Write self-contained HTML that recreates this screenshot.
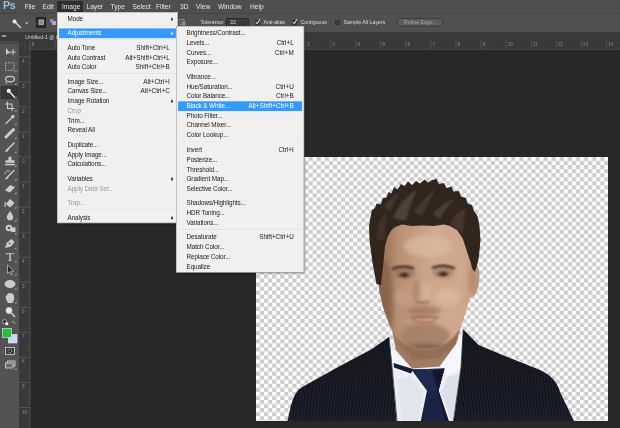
<!DOCTYPE html>
<html><head><meta charset="utf-8">
<style>
html,body{margin:0;padding:0;}
body{width:620px;height:428px;overflow:hidden;background:#282828;position:relative;font-family:"Liberation Sans",sans-serif;}
.abs{position:absolute;}
#menubar{left:0;top:0;width:620px;height:14px;background:#4f4f4f;}
#optbar{left:0;top:13px;width:620px;height:19px;background:#505050;border-top:1px solid #444;box-sizing:border-box;}
#tabbar{left:0;top:32px;width:620px;height:9px;background:#3a3a3a;}
#hruler{left:19px;top:41px;width:601px;height:9px;background:#393939;}
#vruler{left:19px;top:50px;width:11px;height:378px;background:#393939;}
#toolbar{left:0;top:41px;width:19px;height:387px;background:#535353;}
.sc{position:absolute;transform:scale(0.5125);transform-origin:0 0;}
.mb{position:absolute;top:0;font-size:12.9px;line-height:16px;color:#e4e4e4;white-space:nowrap;}
.ob{position:absolute;font-size:10.2px;line-height:16px;color:#dcdcdc;white-space:nowrap;}
.menu{background:#f0f0f0;border:1.6px solid #979797;box-sizing:border-box;box-shadow:3px 3px 4px rgba(0,0,0,.55);}
.mi{position:absolute;left:3px;right:3px;height:19px;font-size:12.4px;line-height:19px;color:#1a1a1a;white-space:nowrap;}
.mi .l{position:absolute;letter-spacing:-0.18px;}
.mi .r{position:absolute;}
.mi span,.mb,.ob{filter:blur(0.45px);}
.tl{filter:blur(0.3px);}
.mi.dis{color:#9a9a9a;}
.mi.hl{background:#3399ff;color:#fff;}
.sep{position:absolute;left:3px;right:3px;height:0;border-top:1.5px solid #d2d2d2;border-bottom:1.5px solid #fbfbfb;}
.arr{position:absolute;right:5px;top:5.5px;width:0;height:0;border-left:4.5px solid #111;border-top:4px solid transparent;border-bottom:4px solid transparent;}
</style></head><body>
<div class="abs" id="menubar"></div>
<div class="abs" id="optbar"></div>
<div class="abs" id="tabbar"></div>
<div class="abs" id="hruler"></div>
<div class="abs" id="vruler"></div>
<div class="abs" id="toolbar"></div>

<!-- canvas -->
<svg class="abs" style="left:256px;top:157px;" width="352" height="264" viewBox="256 157 352 264">
<defs>
  <pattern id="chk" x="256" y="157" width="8.1" height="8.1" patternUnits="userSpaceOnUse">
    <rect width="8.1" height="8.1" fill="#ffffff"/>
    <rect x="4.05" y="0" width="4.05" height="4.05" fill="#cbcbcb"/>
    <rect x="0" y="4.05" width="4.05" height="4.05" fill="#cbcbcb"/>
  </pattern>
  <filter id="b1" x="-10%" y="-10%" width="120%" height="120%"><feGaussianBlur stdDeviation="0.6"/></filter>
  <filter id="b2" x="-20%" y="-20%" width="140%" height="140%"><feGaussianBlur stdDeviation="2.2"/></filter>
  <filter id="b3" x="-20%" y="-20%" width="140%" height="140%"><feGaussianBlur stdDeviation="1.1"/></filter>
  <linearGradient id="skin" x1="0" y1="0" x2="1" y2="0">
    <stop offset="0" stop-color="#8f6850"/>
    <stop offset="0.2" stop-color="#b98f74"/>
    <stop offset="0.55" stop-color="#d0a98e"/>
    <stop offset="0.85" stop-color="#cfa78c"/>
    <stop offset="1" stop-color="#bd9278"/>
  </linearGradient>
  <linearGradient id="jack" x1="0" y1="0" x2="0" y2="1">
    <stop offset="0" stop-color="#101119"/>
    <stop offset="1" stop-color="#181a25"/>
  </linearGradient>
  <clipPath id="faceclip"><path id="facep" d="M380 262 L381 240 L388 222 L402 216 L423 215 L444 216 L460 222 L468 240 L471 262 L474.5 263.5 Q480 267 479.5 276 Q479 287 476 293 Q473 298 470 297.5 L468 304 L464 318 L459.5 329 Q452 341 440 346.5 Q427 350.5 414 347 Q402 343 396.5 337 L390 326.5 L384 310 L379.7 293 L378 278 Z"/></clipPath>
  <pattern id="pin" width="3.2" height="10" patternUnits="userSpaceOnUse" patternTransform="rotate(8)">
    <rect x="0" y="0" width="0.5" height="10" fill="#3a3d4e" opacity="0.55"/>
  </pattern>
  <pattern id="pin2" width="3.2" height="10" patternUnits="userSpaceOnUse" patternTransform="rotate(-8)">
    <rect x="0" y="0" width="0.5" height="10" fill="#3a3d4e" opacity="0.55"/>
  </pattern>
</defs>
<rect x="256" y="157" width="352" height="264" fill="url(#chk)"/>
<g filter="url(#b1)">
  <!-- jacket -->
  <path d="M287.5 421 L291 405 Q295 390 304 386 L340 366 L372 349 L389 337 L392 367 L397 421 Z" fill="url(#jack)"/>
  <path d="M453.5 421 L461 367.5 L463.3 329.5 L478.6 345 L500 354 L540 370 Q556 377 560 392 L574 421 Z" fill="url(#jack)"/>
  <path d="M287.5 421 L291 405 Q295 390 304 386 L340 366 L372 349 L389 337 L392 367 L397 421 Z" fill="url(#pin)"/>
  <path d="M453.5 421 L461 367.5 L463.3 329.5 L478.6 345 L500 354 L540 370 Q556 377 560 392 L574 421 Z" fill="url(#pin2)"/>
  <!-- shirt -->
  <path d="M389 338 L392 367 L396.5 421 L453.6 421 L461 367.5 L462 332 L455 345 L440 366 L412 368 L395 350 Z" fill="#eceef4"/>
  <!-- neck -->
  <path d="M392 330 L396 350 L412 368.5 L440 366.5 L456 344 L461 326 Z" fill="#a17a62"/>
  <path d="M394 338 Q425 362 458 336 L456 344 L440 358 L412 360 Z" fill="#8a6650" opacity="0.6" filter="url(#b3)"/>
  <!-- collars -->
  <path d="M389 337.5 L392 350 L412 368.6 L407 376 L392.8 366.5 Z" fill="#f4f5f9"/>
  <path d="M462 331.5 L457 343 L440 366 L447 376 L461 367.5 Z" fill="#f6f7fa"/>
  <!-- tie strap -->
  <path d="M393.5 363 L413 369 L411 373.5 L394 367.5 Z" fill="#141a33"/>
  <!-- tie knot + body -->
  <path d="M411.5 369.5 L444.5 368.5 L438.5 390.5 L448.7 421 L420.8 421 L427 390.5 Z" fill="#1a2342"/>
  <path d="M411.5 369.5 L444.5 368.5 L438.5 390.5 L427 390.5 Z" fill="#1f2a50"/>
  <path d="M432 371 L437 389 L445 421 L448.7 421 L438.5 390.5 L444.5 368.5 Z" fill="#131932"/>
  <!-- shirt shading -->
  <path d="M397 380 L402 421 L418 421 L424 392 L410 376 Z" fill="#dfe2ea" opacity="0.8"/>
  <path d="M441 392 L451 421 L453.6 421 L460 374 L448 377 Z" fill="#d9dce6" opacity="0.8"/>
  <!-- lapel highlights -->
  <path d="M389 337 L392 367 L397 421" stroke="#2a2c38" stroke-width="0.8" fill="none"/>
  <path d="M463.3 329.5 L461 367.5 L453.5 421" stroke="#2a2c38" stroke-width="0.8" fill="none"/>
  <!-- face -->
  <use href="#facep" fill="url(#skin)"/>
  <g clip-path="url(#faceclip)">
    <g filter="url(#b2)">
      <ellipse cx="384" cy="300" rx="9" ry="40" fill="#86604a" opacity="0.75"/>
      <ellipse cx="425" cy="336" rx="25" ry="13" fill="#a27c65" opacity="0.85"/>
      <ellipse cx="424" cy="311" rx="17" ry="5" fill="#9c7660" opacity="0.75"/>
      <ellipse cx="448" cy="297" rx="12" ry="9" fill="#dcb9a1" opacity="0.8"/>
      <ellipse cx="403" cy="298" rx="9" ry="8" fill="#c9a086" opacity="0.6"/>
      <ellipse cx="428" cy="246" rx="24" ry="11" fill="#dcbaa2" opacity="0.75"/>
      <ellipse cx="404" cy="273" rx="11" ry="6" fill="#94705a" opacity="0.8"/>
      <ellipse cx="443" cy="272" rx="11" ry="6" fill="#9f7a64" opacity="0.8"/>
      <ellipse cx="425" cy="349" rx="30" ry="5" fill="#7e5b46" opacity="0.85"/>
      <ellipse cx="472" cy="280" rx="4" ry="14" fill="#b0846b" opacity="0.7"/>
      <ellipse cx="416" cy="290" rx="3" ry="11" fill="#a98067" opacity="0.7"/>
      <ellipse cx="426" cy="292" rx="4" ry="9" fill="#dbb9a2" opacity="0.7"/>
    </g>
    <g filter="url(#b3)">
      <!-- brows -->
      <path d="M392 269 Q403 264.5 414 268.5" stroke="#3a2b22" stroke-width="2.2" fill="none"/>
      <path d="M432 268 Q444 263.5 455 268.5" stroke="#3a2b22" stroke-width="2.2" fill="none"/>
      <!-- eyes -->
      <ellipse cx="404" cy="275" rx="5.5" ry="2.2" fill="#5a4436"/>
      <ellipse cx="443" cy="274" rx="5.5" ry="2.2" fill="#5a4436"/>
      <circle cx="404.5" cy="275" r="2" fill="#2a1f19"/>
      <circle cx="443.5" cy="274" r="2" fill="#2a1f19"/>
      <!-- nose -->
      <path d="M416 301 Q422 304.5 429 301.5" stroke="#8a6450" stroke-width="1.8" fill="none"/>
      <path d="M417 280 Q414 292 415 299" stroke="#b08a73" stroke-width="1.6" fill="none"/>
      <!-- mouth -->
      <path d="M410.5 318 Q424 316 438.5 318" stroke="#8a5a4c" stroke-width="1.7" fill="none"/>
      <path d="M413.5 321 Q424 324.5 435.5 321" stroke="#b27868" stroke-width="2.4" fill="none"/>
    </g>
  </g>
  <!-- hair -->
  <path d="M376.5 284 L372.5 263 L369.5 240 L369 226 L370.5 217 L372 210 L375 208 L376.5 203.5 L380.5 204.5 L383 198 L386.5 197.5 L388.5 192 L391.5 193.5 L394 187 L397.5 189.5 L401 184 L404.5 186 L408 181.5 L412 185 L416 181 L420 183.5 L424.5 179.5 L428 182.5 L432 180 L436.5 179 L439 184 L444 183 L446.5 188 L451.5 186.5 L453.5 191.5 L459 191 L461 196.5 L466 198 L467.5 203.5 L472 205 L474 211 L477.5 216 L479.5 226 L480.5 240 L479 256 L477 266 L474.5 272 L472 268 L470.5 262 L466.5 250 L462.5 238 L457 230 L450 226 L444 224.5 L434 226 L423 225.5 L412 226 L402 224.5 L395 227 L391.5 230 L387.5 237 L385 246 L383.5 262 L381 285 Z" fill="#30251f"/>
  <g filter="url(#b3)" opacity="0.55">
    <path d="M393 218 Q402 197 418 189 Q411 200 406 221 Z" fill="#6b594c"/>
    <path d="M414 212 Q424 198 436 188 Q428 202 422 216 Z" fill="#5a4a3f"/>
    <path d="M433 214 Q442 202 455 199 Q446 207 440 219 Z" fill="#64544a"/>
    <path d="M450 224 Q458 208 467 209 Q463 218 463 234 Z" fill="#54453b"/>
    <path d="M376 238 Q378 220 387 209 Q385 222 385 242 Z" fill="#4d3f36"/>
    <path d="M384 206 Q392 196 400 192 Q394 202 390 212 Z" fill="#57473c"/>
  </g>
</g>
</svg>

<div class="abs" style="left:57px;top:1px;width:26px;height:11px;background:#2e2e2e;"></div>
<div class="sc" style="left:3px;top:0.2px;font-size:21px;line-height:22px;font-weight:bold;color:#9dbde8;letter-spacing:-0.8px;">Ps</div>
<div class="sc" style="left:0;top:2.6px;width:1210px;height:16px;">
<div class="mb" style="left:47.8px;">File</div>
<div class="mb" style="left:82.9px;">Edit</div>
<div class="mb" style="left:121.0px;">Image</div>
<div class="mb" style="left:168.8px;">Layer</div>
<div class="mb" style="left:215.6px;">Type</div>
<div class="mb" style="left:258.5px;">Select</div>
<div class="mb" style="left:304.4px;">Filter</div>
<div class="mb" style="left:351.2px;">3D</div>
<div class="mb" style="left:382.4px;">View</div>
<div class="mb" style="left:425.4px;">Window</div>
<div class="mb" style="left:487.8px;">Help</div>
</div>
<!-- options bar -->
<svg class="abs" style="left:0;top:14px;" width="620" height="18" viewBox="0 14 620 18">
  <!-- magic wand tool icon -->
  <g stroke="#e8e8e8" stroke-width="1.3" stroke-linecap="round" fill="none">
    <line x1="16" y1="23" x2="20.5" y2="27.5"/>
  </g>
  <circle cx="14.5" cy="21.5" r="2" fill="#f0f0f0"/>
  <path d="M25.2 23.8 L28.2 23.8 L26.7 22.2 Z" fill="#dcdcdc" transform="rotate(180 26.7 23.2)"/>
  <!-- selection mode buttons -->
  <rect x="36.5" y="17.5" width="9" height="10" fill="#2a2a2a" stroke="#222" stroke-width="1"/>
  <rect x="39" y="20" width="4.5" height="4.5" fill="#8a8a8a" stroke="#cfcfcf" stroke-width="0.7"/>
  <rect x="50" y="19" width="3.5" height="3.5" fill="#9a86b8"/>
  <rect x="52" y="21" width="4" height="4" fill="#b8a6cf"/>
  <!-- right of menu: remaining icon -->
  <rect x="179" y="19.5" width="5" height="5" fill="none" stroke="#9a9a9a" stroke-width="0.7"/>
  <rect x="181.5" y="21.5" width="4" height="4" fill="#8a8a8a"/>
  <!-- tolerance field -->
  <rect x="226.5" y="18.5" width="22" height="8" fill="#3a3a3a" stroke="#2c2c2c" stroke-width="1"/>
  <!-- checkboxes -->
  <rect x="255.5" y="20.5" width="4" height="4" fill="#3e3e3e" stroke="#2e2e2e" stroke-width="0.8"/>
  <path d="M255.8 22 L257.2 23.8 L260 19.2" stroke="#f0f0f0" stroke-width="1" fill="none"/>
  <rect x="292.5" y="20.5" width="4" height="4" fill="#3e3e3e" stroke="#2e2e2e" stroke-width="0.8"/>
  <path d="M292.8 22 L294.2 23.8 L297 19.2" stroke="#f0f0f0" stroke-width="1" fill="none"/>
  <rect x="335.5" y="20.5" width="4" height="4" fill="#3e3e3e" stroke="#2e2e2e" stroke-width="0.8"/>
  <!-- refine edge button -->
  <rect x="397.5" y="18.5" width="45" height="8" rx="1" fill="#5a5a5a" stroke="#3c3c3c" stroke-width="1"/>
</svg>

<div class="sc" style="left:0;top:0;width:1210px;height:80px;">
<div class="ob" style="left:391.2px;top:36.1px;">Tolerance:</div>
<div class="ob" style="left:448.8px;top:36.1px;">32</div>
<div class="ob" style="left:514.1px;top:36.1px;">Anti-alias</div>
<div class="ob" style="left:586.3px;top:36.1px;">Contiguous</div>
<div class="ob" style="left:670.2px;top:36.1px;">Sample All Layers</div>
<div class="ob" style="left:788.3px;top:36.1px;color:#a8a8a8;">Refine Edge...</div>
<div class="ob" style="left:49.5px;top:66.2px;color:#d4d4d4;">Untitled-1 @ 66.7% (Layer 0, RGB/8) *</div>
</div>
<svg class="abs tl" style="left:0;top:32px;" width="31" height="396" viewBox="0 32 31 396">
<rect x="0" y="32" width="19" height="9" fill="#3a3a3a"/>
<rect x="1.5" y="35" width="5" height="2" rx="1" fill="#9a9a9a"/>
<rect x="0" y="41" width="19" height="3" fill="#484848"/>
<rect x="1" y="86.5" width="17" height="12" rx="1" fill="#383838" stroke="#2e2e2e" stroke-width="0.8"/>
<path d="M6 48 L6 55 L8 53.2 L10.5 53.5 Z" fill="#cdcdcd"/>
<path d="M13 49 V55 M10 52 H16" stroke="#cdcdcd" stroke-width="1" fill="none"/>
<rect x="5.5" y="62.8" width="8.5" height="7.5" fill="none" stroke="#bdbdbd" stroke-width="0.9" stroke-dasharray="1.6 1"/>
<path d="M16.5 72.3 L16.5 70.3 L14.5 72.3 Z" fill="#b0b0b0"/>
<ellipse cx="10" cy="79.1" rx="4.5" ry="2.8" fill="none" stroke="#cdcdcd" stroke-width="1.2"/>
<path d="M6.5 81.1 Q5 83.1 7 84.1" stroke="#cdcdcd" stroke-width="0.9" fill="none"/>
<path d="M16.5 85.1 L16.5 83.1 L14.5 85.1 Z" fill="#b0b0b0"/>
<line x1="10.5" y1="92.7" x2="14.5" y2="97.2" stroke="#f0f0f0" stroke-width="1.3" stroke-linecap="round"/>
<circle cx="8.8" cy="90.9" r="2.1" fill="#f4f4f4"/>
<path d="M16.5 98.2 L16.5 96.2 L14.5 98.2 Z" fill="#b0b0b0"/>
<path d="M7.5 101.5 V108.5 H14.5 M5 104 H12 V111" stroke="#cdcdcd" stroke-width="1.1" fill="none"/>
<path d="M16.5 111.5 L16.5 109.5 L14.5 111.5 Z" fill="#b0b0b0"/>
<path d="M6 123.5 L11 118.5" stroke="#cdcdcd" stroke-width="1.2" stroke-linecap="round"/>
<path d="M10.5 117.0 L13 114.5 L15 116.5 L12.5 119.0 Z" fill="#cdcdcd"/>
<path d="M16.5 125.0 L16.5 123.0 L14.5 125.0 Z" fill="#b0b0b0"/>
<path d="M6 137.0 L13.5 129.5" stroke="#cdcdcd" stroke-width="3" stroke-linecap="round"/>
<path d="M16.5 139.0 L16.5 137.0 L14.5 139.0 Z" fill="#b0b0b0"/>
<path d="M7.5 149.5 L14 143.0" stroke="#cdcdcd" stroke-width="1.5" stroke-linecap="round"/>
<path d="M5 152.0 Q5.5 149.0 8 148.7 L8.8 149.7 Q8 152.0 5 152.0 Z" fill="#cdcdcd"/>
<path d="M16.5 153.0 L16.5 151.0 L14.5 153.0 Z" fill="#b0b0b0"/>
<path d="M8.5 156.8 H11.5 V160.3 H14.5 V162.8 H5.5 V160.3 H8.5 Z" fill="#cdcdcd"/>
<rect x="5" y="163.8" width="10" height="1.5" fill="#cdcdcd"/>
<path d="M16.5 166.8 L16.5 164.8 L14.5 166.8 Z" fill="#b0b0b0"/>
<path d="M8 176.5 L14 170.5" stroke="#cdcdcd" stroke-width="1.4" stroke-linecap="round"/>
<path d="M5 179.5 Q5.5 176.5 8 176.2 L8.8 177.2 Q8 179.5 5 179.5 Z" fill="#cdcdcd"/>
<path d="M5 174 A3 3 0 0 1 10 171.5" stroke="#cdcdcd" stroke-width="0.9" fill="none"/>
<path d="M16.5 180.5 L16.5 178.5 L14.5 180.5 Z" fill="#b0b0b0"/>
<path d="M5 190.5 L10 185.0 L15 187.0 L10 192.5 Z" fill="#cdcdcd"/>
<path d="M16.5 194.0 L16.5 192.0 L14.5 194.0 Z" fill="#b0b0b0"/>
<path d="M6 204 L10 199 L14.5 203 L10 207.5 Z" fill="#cdcdcd"/>
<path d="M5.5 202 Q4.5 205 5.5 207" stroke="#cdcdcd" stroke-width="1.2" fill="none"/>
<path d="M16.5 208.5 L16.5 206.5 L14.5 208.5 Z" fill="#b0b0b0"/>
<path d="M10 211 Q14 216.5 13 218.5 A3.2 3.2 0 0 1 7 218.5 Q6 216.5 10 211 Z" fill="#cdcdcd"/>
<path d="M16.5 221.5 L16.5 219.5 L14.5 221.5 Z" fill="#b0b0b0"/>
<circle cx="9" cy="228" r="3.3" fill="#cdcdcd"/>
<rect x="11" y="227.5" width="4.5" height="4.5" fill="#cdcdcd"/>
<circle cx="9" cy="228" r="1.3" fill="#535353"/>
<path d="M16.5 234.5 L16.5 232.5 L14.5 234.5 Z" fill="#b0b0b0"/>
<path d="M5 247.9 L7 242.4 L11.5 238.9 L14.5 241.9 L11 246.4 Z" fill="#cdcdcd"/>
<circle cx="9.5" cy="243.4" r="0.9" fill="#535353"/>
<path d="M16.5 248.9 L16.5 246.9 L14.5 248.9 Z" fill="#b0b0b0"/>
<text x="10" y="261.1" font-family="Liberation Serif, serif" font-size="12.5" text-anchor="middle" fill="#e0e0e0">T</text>
<path d="M16.5 262.3 L16.5 260.3 L14.5 262.3 Z" fill="#b0b0b0"/>
<path d="M7.5 265 L7.5 273.5 L9.6 271.6 L11 274.8 L12.4 274.2 L11 271.2 L13.6 271 Z" fill="#222" stroke="#cfcfcf" stroke-width="0.7"/>
<path d="M16.5 275.5 L16.5 273.5 L14.5 275.5 Z" fill="#b0b0b0"/>
<ellipse cx="10" cy="284" rx="5" ry="3.6" fill="#c9c9c9" stroke="#e6e6e6" stroke-width="0.7"/>
<path d="M16.5 289.5 L16.5 287.5 L14.5 289.5 Z" fill="#b0b0b0"/>
<path d="M6 299 Q5 296 7 295 L8 293.5 L10 293 L12 293.5 L13.5 294.5 Q15 298 13.5 301 L12.5 303 H8 Z" fill="#cdcdcd"/>
<path d="M16.5 303.5 L16.5 301.5 L14.5 303.5 Z" fill="#b0b0b0"/>
<circle cx="9" cy="310.5" r="3" fill="#e8e8e8" stroke="#cdcdcd" stroke-width="1"/>
<line x1="11.3" y1="313" x2="14.5" y2="316.5" stroke="#cdcdcd" stroke-width="1.6" stroke-linecap="round"/>
<rect x="3" y="320" width="3.4" height="3.4" fill="#111" stroke="#ddd" stroke-width="0.6"/>
<rect x="5" y="322" width="3.4" height="3.4" fill="#f4f4f4" stroke="#222" stroke-width="0.4"/>
<path d="M12 321.5 Q14.5 321 15 324" stroke="#d9b37a" stroke-width="0.9" fill="none"/>
<rect x="8.4" y="334.4" width="8.6" height="8.6" fill="#c9dcf5" stroke="#e8e8e8" stroke-width="0.6"/>
<rect x="2.4" y="328.4" width="9" height="9" fill="#20c040" stroke="#e8e8e8" stroke-width="0.6"/>
<rect x="5.5" y="347.5" width="9" height="7" fill="#3a3a3a" stroke="#d8d8d8" stroke-width="0.8"/>
<circle cx="10" cy="351" r="1.9" fill="none" stroke="#d8d8d8" stroke-width="0.7" stroke-dasharray="1 0.7"/>
<rect x="7.5" y="361" width="7.5" height="5" fill="#6a6a6a" stroke="#d8d8d8" stroke-width="0.8"/>
<rect x="5.5" y="363" width="7.5" height="5" fill="#6a6a6a" stroke="#d8d8d8" stroke-width="0.8"/>
<path d="M16.5 370 L16.5 368 L14.5 370 Z" fill="#b0b0b0"/>
</svg>
<svg class="abs" style="left:19px;top:41px;" width="601" height="387" viewBox="19 41 601 387" font-family="Liberation Sans, sans-serif" font-size="4.6" fill="#8c8c8c">
<rect x="19" y="41" width="11" height="9" fill="#393939"/>
<path d="M19.5 45.5 H30 M25 41 V50" stroke="#5a5a5a" stroke-width="0.6" stroke-dasharray="1 1"/>
<line x1="30.15" y1="41" x2="30.15" y2="50" stroke="#606060" stroke-width="0.7"/>
<text x="31.75" y="46.3">9</text>
<line x1="33.28" y1="48.8" x2="33.28" y2="50" stroke="#555" stroke-width="0.6"/>
<line x1="36.41" y1="48" x2="36.41" y2="50" stroke="#555" stroke-width="0.6"/>
<line x1="39.54" y1="48.8" x2="39.54" y2="50" stroke="#555" stroke-width="0.6"/>
<line x1="42.67" y1="47" x2="42.67" y2="50" stroke="#555" stroke-width="0.6"/>
<line x1="45.81" y1="48.8" x2="45.81" y2="50" stroke="#555" stroke-width="0.6"/>
<line x1="48.94" y1="48" x2="48.94" y2="50" stroke="#555" stroke-width="0.6"/>
<line x1="52.07" y1="48.8" x2="52.07" y2="50" stroke="#555" stroke-width="0.6"/>
<line x1="55.20" y1="41" x2="55.20" y2="50" stroke="#606060" stroke-width="0.7"/>
<text x="56.80" y="46.3">8</text>
<line x1="58.33" y1="48.8" x2="58.33" y2="50" stroke="#555" stroke-width="0.6"/>
<line x1="61.46" y1="48" x2="61.46" y2="50" stroke="#555" stroke-width="0.6"/>
<line x1="64.59" y1="48.8" x2="64.59" y2="50" stroke="#555" stroke-width="0.6"/>
<line x1="67.72" y1="47" x2="67.72" y2="50" stroke="#555" stroke-width="0.6"/>
<line x1="70.86" y1="48.8" x2="70.86" y2="50" stroke="#555" stroke-width="0.6"/>
<line x1="73.99" y1="48" x2="73.99" y2="50" stroke="#555" stroke-width="0.6"/>
<line x1="77.12" y1="48.8" x2="77.12" y2="50" stroke="#555" stroke-width="0.6"/>
<line x1="80.25" y1="41" x2="80.25" y2="50" stroke="#606060" stroke-width="0.7"/>
<text x="81.85" y="46.3">7</text>
<line x1="83.38" y1="48.8" x2="83.38" y2="50" stroke="#555" stroke-width="0.6"/>
<line x1="86.51" y1="48" x2="86.51" y2="50" stroke="#555" stroke-width="0.6"/>
<line x1="89.64" y1="48.8" x2="89.64" y2="50" stroke="#555" stroke-width="0.6"/>
<line x1="92.78" y1="47" x2="92.78" y2="50" stroke="#555" stroke-width="0.6"/>
<line x1="95.91" y1="48.8" x2="95.91" y2="50" stroke="#555" stroke-width="0.6"/>
<line x1="99.04" y1="48" x2="99.04" y2="50" stroke="#555" stroke-width="0.6"/>
<line x1="102.17" y1="48.8" x2="102.17" y2="50" stroke="#555" stroke-width="0.6"/>
<line x1="105.30" y1="41" x2="105.30" y2="50" stroke="#606060" stroke-width="0.7"/>
<text x="106.90" y="46.3">6</text>
<line x1="108.43" y1="48.8" x2="108.43" y2="50" stroke="#555" stroke-width="0.6"/>
<line x1="111.56" y1="48" x2="111.56" y2="50" stroke="#555" stroke-width="0.6"/>
<line x1="114.69" y1="48.8" x2="114.69" y2="50" stroke="#555" stroke-width="0.6"/>
<line x1="117.82" y1="47" x2="117.82" y2="50" stroke="#555" stroke-width="0.6"/>
<line x1="120.96" y1="48.8" x2="120.96" y2="50" stroke="#555" stroke-width="0.6"/>
<line x1="124.09" y1="48" x2="124.09" y2="50" stroke="#555" stroke-width="0.6"/>
<line x1="127.22" y1="48.8" x2="127.22" y2="50" stroke="#555" stroke-width="0.6"/>
<line x1="130.35" y1="41" x2="130.35" y2="50" stroke="#606060" stroke-width="0.7"/>
<text x="131.95" y="46.3">5</text>
<line x1="133.48" y1="48.8" x2="133.48" y2="50" stroke="#555" stroke-width="0.6"/>
<line x1="136.61" y1="48" x2="136.61" y2="50" stroke="#555" stroke-width="0.6"/>
<line x1="139.74" y1="48.8" x2="139.74" y2="50" stroke="#555" stroke-width="0.6"/>
<line x1="142.88" y1="47" x2="142.88" y2="50" stroke="#555" stroke-width="0.6"/>
<line x1="146.01" y1="48.8" x2="146.01" y2="50" stroke="#555" stroke-width="0.6"/>
<line x1="149.14" y1="48" x2="149.14" y2="50" stroke="#555" stroke-width="0.6"/>
<line x1="152.27" y1="48.8" x2="152.27" y2="50" stroke="#555" stroke-width="0.6"/>
<line x1="155.40" y1="41" x2="155.40" y2="50" stroke="#606060" stroke-width="0.7"/>
<text x="157.00" y="46.3">4</text>
<line x1="158.53" y1="48.8" x2="158.53" y2="50" stroke="#555" stroke-width="0.6"/>
<line x1="161.66" y1="48" x2="161.66" y2="50" stroke="#555" stroke-width="0.6"/>
<line x1="164.79" y1="48.8" x2="164.79" y2="50" stroke="#555" stroke-width="0.6"/>
<line x1="167.92" y1="47" x2="167.92" y2="50" stroke="#555" stroke-width="0.6"/>
<line x1="171.06" y1="48.8" x2="171.06" y2="50" stroke="#555" stroke-width="0.6"/>
<line x1="174.19" y1="48" x2="174.19" y2="50" stroke="#555" stroke-width="0.6"/>
<line x1="177.32" y1="48.8" x2="177.32" y2="50" stroke="#555" stroke-width="0.6"/>
<line x1="180.45" y1="41" x2="180.45" y2="50" stroke="#606060" stroke-width="0.7"/>
<text x="182.05" y="46.3">3</text>
<line x1="183.58" y1="48.8" x2="183.58" y2="50" stroke="#555" stroke-width="0.6"/>
<line x1="186.71" y1="48" x2="186.71" y2="50" stroke="#555" stroke-width="0.6"/>
<line x1="189.84" y1="48.8" x2="189.84" y2="50" stroke="#555" stroke-width="0.6"/>
<line x1="192.97" y1="47" x2="192.97" y2="50" stroke="#555" stroke-width="0.6"/>
<line x1="196.11" y1="48.8" x2="196.11" y2="50" stroke="#555" stroke-width="0.6"/>
<line x1="199.24" y1="48" x2="199.24" y2="50" stroke="#555" stroke-width="0.6"/>
<line x1="202.37" y1="48.8" x2="202.37" y2="50" stroke="#555" stroke-width="0.6"/>
<line x1="205.50" y1="41" x2="205.50" y2="50" stroke="#606060" stroke-width="0.7"/>
<text x="207.10" y="46.3">2</text>
<line x1="208.63" y1="48.8" x2="208.63" y2="50" stroke="#555" stroke-width="0.6"/>
<line x1="211.76" y1="48" x2="211.76" y2="50" stroke="#555" stroke-width="0.6"/>
<line x1="214.89" y1="48.8" x2="214.89" y2="50" stroke="#555" stroke-width="0.6"/>
<line x1="218.03" y1="47" x2="218.03" y2="50" stroke="#555" stroke-width="0.6"/>
<line x1="221.16" y1="48.8" x2="221.16" y2="50" stroke="#555" stroke-width="0.6"/>
<line x1="224.29" y1="48" x2="224.29" y2="50" stroke="#555" stroke-width="0.6"/>
<line x1="227.42" y1="48.8" x2="227.42" y2="50" stroke="#555" stroke-width="0.6"/>
<line x1="230.55" y1="41" x2="230.55" y2="50" stroke="#606060" stroke-width="0.7"/>
<text x="232.15" y="46.3">1</text>
<line x1="233.68" y1="48.8" x2="233.68" y2="50" stroke="#555" stroke-width="0.6"/>
<line x1="236.81" y1="48" x2="236.81" y2="50" stroke="#555" stroke-width="0.6"/>
<line x1="239.94" y1="48.8" x2="239.94" y2="50" stroke="#555" stroke-width="0.6"/>
<line x1="243.07" y1="47" x2="243.07" y2="50" stroke="#555" stroke-width="0.6"/>
<line x1="246.21" y1="48.8" x2="246.21" y2="50" stroke="#555" stroke-width="0.6"/>
<line x1="249.34" y1="48" x2="249.34" y2="50" stroke="#555" stroke-width="0.6"/>
<line x1="252.47" y1="48.8" x2="252.47" y2="50" stroke="#555" stroke-width="0.6"/>
<line x1="255.60" y1="41" x2="255.60" y2="50" stroke="#606060" stroke-width="0.7"/>
<text x="257.20" y="46.3">0</text>
<line x1="258.73" y1="48.8" x2="258.73" y2="50" stroke="#555" stroke-width="0.6"/>
<line x1="261.86" y1="48" x2="261.86" y2="50" stroke="#555" stroke-width="0.6"/>
<line x1="264.99" y1="48.8" x2="264.99" y2="50" stroke="#555" stroke-width="0.6"/>
<line x1="268.12" y1="47" x2="268.12" y2="50" stroke="#555" stroke-width="0.6"/>
<line x1="271.26" y1="48.8" x2="271.26" y2="50" stroke="#555" stroke-width="0.6"/>
<line x1="274.39" y1="48" x2="274.39" y2="50" stroke="#555" stroke-width="0.6"/>
<line x1="277.52" y1="48.8" x2="277.52" y2="50" stroke="#555" stroke-width="0.6"/>
<line x1="280.65" y1="41" x2="280.65" y2="50" stroke="#606060" stroke-width="0.7"/>
<text x="282.25" y="46.3">1</text>
<line x1="283.78" y1="48.8" x2="283.78" y2="50" stroke="#555" stroke-width="0.6"/>
<line x1="286.91" y1="48" x2="286.91" y2="50" stroke="#555" stroke-width="0.6"/>
<line x1="290.04" y1="48.8" x2="290.04" y2="50" stroke="#555" stroke-width="0.6"/>
<line x1="293.17" y1="47" x2="293.17" y2="50" stroke="#555" stroke-width="0.6"/>
<line x1="296.31" y1="48.8" x2="296.31" y2="50" stroke="#555" stroke-width="0.6"/>
<line x1="299.44" y1="48" x2="299.44" y2="50" stroke="#555" stroke-width="0.6"/>
<line x1="302.57" y1="48.8" x2="302.57" y2="50" stroke="#555" stroke-width="0.6"/>
<line x1="305.70" y1="41" x2="305.70" y2="50" stroke="#606060" stroke-width="0.7"/>
<text x="307.30" y="46.3">2</text>
<line x1="308.83" y1="48.8" x2="308.83" y2="50" stroke="#555" stroke-width="0.6"/>
<line x1="311.96" y1="48" x2="311.96" y2="50" stroke="#555" stroke-width="0.6"/>
<line x1="315.09" y1="48.8" x2="315.09" y2="50" stroke="#555" stroke-width="0.6"/>
<line x1="318.22" y1="47" x2="318.22" y2="50" stroke="#555" stroke-width="0.6"/>
<line x1="321.36" y1="48.8" x2="321.36" y2="50" stroke="#555" stroke-width="0.6"/>
<line x1="324.49" y1="48" x2="324.49" y2="50" stroke="#555" stroke-width="0.6"/>
<line x1="327.62" y1="48.8" x2="327.62" y2="50" stroke="#555" stroke-width="0.6"/>
<line x1="330.75" y1="41" x2="330.75" y2="50" stroke="#606060" stroke-width="0.7"/>
<text x="332.35" y="46.3">3</text>
<line x1="333.88" y1="48.8" x2="333.88" y2="50" stroke="#555" stroke-width="0.6"/>
<line x1="337.01" y1="48" x2="337.01" y2="50" stroke="#555" stroke-width="0.6"/>
<line x1="340.14" y1="48.8" x2="340.14" y2="50" stroke="#555" stroke-width="0.6"/>
<line x1="343.27" y1="47" x2="343.27" y2="50" stroke="#555" stroke-width="0.6"/>
<line x1="346.41" y1="48.8" x2="346.41" y2="50" stroke="#555" stroke-width="0.6"/>
<line x1="349.54" y1="48" x2="349.54" y2="50" stroke="#555" stroke-width="0.6"/>
<line x1="352.67" y1="48.8" x2="352.67" y2="50" stroke="#555" stroke-width="0.6"/>
<line x1="355.80" y1="41" x2="355.80" y2="50" stroke="#606060" stroke-width="0.7"/>
<text x="357.40" y="46.3">4</text>
<line x1="358.93" y1="48.8" x2="358.93" y2="50" stroke="#555" stroke-width="0.6"/>
<line x1="362.06" y1="48" x2="362.06" y2="50" stroke="#555" stroke-width="0.6"/>
<line x1="365.19" y1="48.8" x2="365.19" y2="50" stroke="#555" stroke-width="0.6"/>
<line x1="368.32" y1="47" x2="368.32" y2="50" stroke="#555" stroke-width="0.6"/>
<line x1="371.46" y1="48.8" x2="371.46" y2="50" stroke="#555" stroke-width="0.6"/>
<line x1="374.59" y1="48" x2="374.59" y2="50" stroke="#555" stroke-width="0.6"/>
<line x1="377.72" y1="48.8" x2="377.72" y2="50" stroke="#555" stroke-width="0.6"/>
<line x1="380.85" y1="41" x2="380.85" y2="50" stroke="#606060" stroke-width="0.7"/>
<text x="382.45" y="46.3">5</text>
<line x1="383.98" y1="48.8" x2="383.98" y2="50" stroke="#555" stroke-width="0.6"/>
<line x1="387.11" y1="48" x2="387.11" y2="50" stroke="#555" stroke-width="0.6"/>
<line x1="390.24" y1="48.8" x2="390.24" y2="50" stroke="#555" stroke-width="0.6"/>
<line x1="393.38" y1="47" x2="393.38" y2="50" stroke="#555" stroke-width="0.6"/>
<line x1="396.51" y1="48.8" x2="396.51" y2="50" stroke="#555" stroke-width="0.6"/>
<line x1="399.64" y1="48" x2="399.64" y2="50" stroke="#555" stroke-width="0.6"/>
<line x1="402.77" y1="48.8" x2="402.77" y2="50" stroke="#555" stroke-width="0.6"/>
<line x1="405.90" y1="41" x2="405.90" y2="50" stroke="#606060" stroke-width="0.7"/>
<text x="407.50" y="46.3">6</text>
<line x1="409.03" y1="48.8" x2="409.03" y2="50" stroke="#555" stroke-width="0.6"/>
<line x1="412.16" y1="48" x2="412.16" y2="50" stroke="#555" stroke-width="0.6"/>
<line x1="415.29" y1="48.8" x2="415.29" y2="50" stroke="#555" stroke-width="0.6"/>
<line x1="418.42" y1="47" x2="418.42" y2="50" stroke="#555" stroke-width="0.6"/>
<line x1="421.56" y1="48.8" x2="421.56" y2="50" stroke="#555" stroke-width="0.6"/>
<line x1="424.69" y1="48" x2="424.69" y2="50" stroke="#555" stroke-width="0.6"/>
<line x1="427.82" y1="48.8" x2="427.82" y2="50" stroke="#555" stroke-width="0.6"/>
<line x1="430.95" y1="41" x2="430.95" y2="50" stroke="#606060" stroke-width="0.7"/>
<text x="432.55" y="46.3">7</text>
<line x1="434.08" y1="48.8" x2="434.08" y2="50" stroke="#555" stroke-width="0.6"/>
<line x1="437.21" y1="48" x2="437.21" y2="50" stroke="#555" stroke-width="0.6"/>
<line x1="440.34" y1="48.8" x2="440.34" y2="50" stroke="#555" stroke-width="0.6"/>
<line x1="443.47" y1="47" x2="443.47" y2="50" stroke="#555" stroke-width="0.6"/>
<line x1="446.61" y1="48.8" x2="446.61" y2="50" stroke="#555" stroke-width="0.6"/>
<line x1="449.74" y1="48" x2="449.74" y2="50" stroke="#555" stroke-width="0.6"/>
<line x1="452.87" y1="48.8" x2="452.87" y2="50" stroke="#555" stroke-width="0.6"/>
<line x1="456.00" y1="41" x2="456.00" y2="50" stroke="#606060" stroke-width="0.7"/>
<text x="457.60" y="46.3">8</text>
<line x1="459.13" y1="48.8" x2="459.13" y2="50" stroke="#555" stroke-width="0.6"/>
<line x1="462.26" y1="48" x2="462.26" y2="50" stroke="#555" stroke-width="0.6"/>
<line x1="465.39" y1="48.8" x2="465.39" y2="50" stroke="#555" stroke-width="0.6"/>
<line x1="468.52" y1="47" x2="468.52" y2="50" stroke="#555" stroke-width="0.6"/>
<line x1="471.66" y1="48.8" x2="471.66" y2="50" stroke="#555" stroke-width="0.6"/>
<line x1="474.79" y1="48" x2="474.79" y2="50" stroke="#555" stroke-width="0.6"/>
<line x1="477.92" y1="48.8" x2="477.92" y2="50" stroke="#555" stroke-width="0.6"/>
<line x1="481.05" y1="41" x2="481.05" y2="50" stroke="#606060" stroke-width="0.7"/>
<text x="482.65" y="46.3">9</text>
<line x1="484.18" y1="48.8" x2="484.18" y2="50" stroke="#555" stroke-width="0.6"/>
<line x1="487.31" y1="48" x2="487.31" y2="50" stroke="#555" stroke-width="0.6"/>
<line x1="490.44" y1="48.8" x2="490.44" y2="50" stroke="#555" stroke-width="0.6"/>
<line x1="493.57" y1="47" x2="493.57" y2="50" stroke="#555" stroke-width="0.6"/>
<line x1="496.71" y1="48.8" x2="496.71" y2="50" stroke="#555" stroke-width="0.6"/>
<line x1="499.84" y1="48" x2="499.84" y2="50" stroke="#555" stroke-width="0.6"/>
<line x1="502.97" y1="48.8" x2="502.97" y2="50" stroke="#555" stroke-width="0.6"/>
<line x1="506.10" y1="41" x2="506.10" y2="50" stroke="#606060" stroke-width="0.7"/>
<text x="507.70" y="46.3">10</text>
<line x1="509.23" y1="48.8" x2="509.23" y2="50" stroke="#555" stroke-width="0.6"/>
<line x1="512.36" y1="48" x2="512.36" y2="50" stroke="#555" stroke-width="0.6"/>
<line x1="515.49" y1="48.8" x2="515.49" y2="50" stroke="#555" stroke-width="0.6"/>
<line x1="518.62" y1="47" x2="518.62" y2="50" stroke="#555" stroke-width="0.6"/>
<line x1="521.76" y1="48.8" x2="521.76" y2="50" stroke="#555" stroke-width="0.6"/>
<line x1="524.89" y1="48" x2="524.89" y2="50" stroke="#555" stroke-width="0.6"/>
<line x1="528.02" y1="48.8" x2="528.02" y2="50" stroke="#555" stroke-width="0.6"/>
<line x1="531.15" y1="41" x2="531.15" y2="50" stroke="#606060" stroke-width="0.7"/>
<text x="532.75" y="46.3">11</text>
<line x1="534.28" y1="48.8" x2="534.28" y2="50" stroke="#555" stroke-width="0.6"/>
<line x1="537.41" y1="48" x2="537.41" y2="50" stroke="#555" stroke-width="0.6"/>
<line x1="540.54" y1="48.8" x2="540.54" y2="50" stroke="#555" stroke-width="0.6"/>
<line x1="543.67" y1="47" x2="543.67" y2="50" stroke="#555" stroke-width="0.6"/>
<line x1="546.81" y1="48.8" x2="546.81" y2="50" stroke="#555" stroke-width="0.6"/>
<line x1="549.94" y1="48" x2="549.94" y2="50" stroke="#555" stroke-width="0.6"/>
<line x1="553.07" y1="48.8" x2="553.07" y2="50" stroke="#555" stroke-width="0.6"/>
<line x1="556.20" y1="41" x2="556.20" y2="50" stroke="#606060" stroke-width="0.7"/>
<text x="557.80" y="46.3">12</text>
<line x1="559.33" y1="48.8" x2="559.33" y2="50" stroke="#555" stroke-width="0.6"/>
<line x1="562.46" y1="48" x2="562.46" y2="50" stroke="#555" stroke-width="0.6"/>
<line x1="565.59" y1="48.8" x2="565.59" y2="50" stroke="#555" stroke-width="0.6"/>
<line x1="568.73" y1="47" x2="568.73" y2="50" stroke="#555" stroke-width="0.6"/>
<line x1="571.86" y1="48.8" x2="571.86" y2="50" stroke="#555" stroke-width="0.6"/>
<line x1="574.99" y1="48" x2="574.99" y2="50" stroke="#555" stroke-width="0.6"/>
<line x1="578.12" y1="48.8" x2="578.12" y2="50" stroke="#555" stroke-width="0.6"/>
<line x1="581.25" y1="41" x2="581.25" y2="50" stroke="#606060" stroke-width="0.7"/>
<text x="582.85" y="46.3">13</text>
<line x1="584.38" y1="48.8" x2="584.38" y2="50" stroke="#555" stroke-width="0.6"/>
<line x1="587.51" y1="48" x2="587.51" y2="50" stroke="#555" stroke-width="0.6"/>
<line x1="590.64" y1="48.8" x2="590.64" y2="50" stroke="#555" stroke-width="0.6"/>
<line x1="593.77" y1="47" x2="593.77" y2="50" stroke="#555" stroke-width="0.6"/>
<line x1="596.91" y1="48.8" x2="596.91" y2="50" stroke="#555" stroke-width="0.6"/>
<line x1="600.04" y1="48" x2="600.04" y2="50" stroke="#555" stroke-width="0.6"/>
<line x1="603.17" y1="48.8" x2="603.17" y2="50" stroke="#555" stroke-width="0.6"/>
<line x1="606.30" y1="41" x2="606.30" y2="50" stroke="#606060" stroke-width="0.7"/>
<text x="607.90" y="46.3">14</text>
<line x1="609.43" y1="48.8" x2="609.43" y2="50" stroke="#555" stroke-width="0.6"/>
<line x1="612.56" y1="48" x2="612.56" y2="50" stroke="#555" stroke-width="0.6"/>
<line x1="615.69" y1="48.8" x2="615.69" y2="50" stroke="#555" stroke-width="0.6"/>
<line x1="618.82" y1="47" x2="618.82" y2="50" stroke="#555" stroke-width="0.6"/>
<line x1="28.8" y1="53.67" x2="30" y2="53.67" stroke="#555" stroke-width="0.6"/>
<line x1="19" y1="56.80" x2="30" y2="56.80" stroke="#606060" stroke-width="0.7"/>
<text x="22" y="62.80">4</text>
<line x1="28.8" y1="59.93" x2="30" y2="59.93" stroke="#555" stroke-width="0.6"/>
<line x1="28" y1="63.06" x2="30" y2="63.06" stroke="#555" stroke-width="0.6"/>
<line x1="28.8" y1="66.19" x2="30" y2="66.19" stroke="#555" stroke-width="0.6"/>
<line x1="27" y1="69.33" x2="30" y2="69.33" stroke="#555" stroke-width="0.6"/>
<line x1="28.8" y1="72.46" x2="30" y2="72.46" stroke="#555" stroke-width="0.6"/>
<line x1="28" y1="75.59" x2="30" y2="75.59" stroke="#555" stroke-width="0.6"/>
<line x1="28.8" y1="78.72" x2="30" y2="78.72" stroke="#555" stroke-width="0.6"/>
<line x1="19" y1="81.85" x2="30" y2="81.85" stroke="#606060" stroke-width="0.7"/>
<text x="22" y="87.85">3</text>
<line x1="28.8" y1="84.98" x2="30" y2="84.98" stroke="#555" stroke-width="0.6"/>
<line x1="28" y1="88.11" x2="30" y2="88.11" stroke="#555" stroke-width="0.6"/>
<line x1="28.8" y1="91.24" x2="30" y2="91.24" stroke="#555" stroke-width="0.6"/>
<line x1="27" y1="94.38" x2="30" y2="94.38" stroke="#555" stroke-width="0.6"/>
<line x1="28.8" y1="97.51" x2="30" y2="97.51" stroke="#555" stroke-width="0.6"/>
<line x1="28" y1="100.64" x2="30" y2="100.64" stroke="#555" stroke-width="0.6"/>
<line x1="28.8" y1="103.77" x2="30" y2="103.77" stroke="#555" stroke-width="0.6"/>
<line x1="19" y1="106.90" x2="30" y2="106.90" stroke="#606060" stroke-width="0.7"/>
<text x="22" y="112.90">2</text>
<line x1="28.8" y1="110.03" x2="30" y2="110.03" stroke="#555" stroke-width="0.6"/>
<line x1="28" y1="113.16" x2="30" y2="113.16" stroke="#555" stroke-width="0.6"/>
<line x1="28.8" y1="116.29" x2="30" y2="116.29" stroke="#555" stroke-width="0.6"/>
<line x1="27" y1="119.43" x2="30" y2="119.43" stroke="#555" stroke-width="0.6"/>
<line x1="28.8" y1="122.56" x2="30" y2="122.56" stroke="#555" stroke-width="0.6"/>
<line x1="28" y1="125.69" x2="30" y2="125.69" stroke="#555" stroke-width="0.6"/>
<line x1="28.8" y1="128.82" x2="30" y2="128.82" stroke="#555" stroke-width="0.6"/>
<line x1="19" y1="131.95" x2="30" y2="131.95" stroke="#606060" stroke-width="0.7"/>
<text x="22" y="137.95">1</text>
<line x1="28.8" y1="135.08" x2="30" y2="135.08" stroke="#555" stroke-width="0.6"/>
<line x1="28" y1="138.21" x2="30" y2="138.21" stroke="#555" stroke-width="0.6"/>
<line x1="28.8" y1="141.34" x2="30" y2="141.34" stroke="#555" stroke-width="0.6"/>
<line x1="27" y1="144.47" x2="30" y2="144.47" stroke="#555" stroke-width="0.6"/>
<line x1="28.8" y1="147.61" x2="30" y2="147.61" stroke="#555" stroke-width="0.6"/>
<line x1="28" y1="150.74" x2="30" y2="150.74" stroke="#555" stroke-width="0.6"/>
<line x1="28.8" y1="153.87" x2="30" y2="153.87" stroke="#555" stroke-width="0.6"/>
<line x1="19" y1="157.00" x2="30" y2="157.00" stroke="#606060" stroke-width="0.7"/>
<text x="22" y="163.00">0</text>
<line x1="28.8" y1="160.13" x2="30" y2="160.13" stroke="#555" stroke-width="0.6"/>
<line x1="28" y1="163.26" x2="30" y2="163.26" stroke="#555" stroke-width="0.6"/>
<line x1="28.8" y1="166.39" x2="30" y2="166.39" stroke="#555" stroke-width="0.6"/>
<line x1="27" y1="169.53" x2="30" y2="169.53" stroke="#555" stroke-width="0.6"/>
<line x1="28.8" y1="172.66" x2="30" y2="172.66" stroke="#555" stroke-width="0.6"/>
<line x1="28" y1="175.79" x2="30" y2="175.79" stroke="#555" stroke-width="0.6"/>
<line x1="28.8" y1="178.92" x2="30" y2="178.92" stroke="#555" stroke-width="0.6"/>
<line x1="19" y1="182.05" x2="30" y2="182.05" stroke="#606060" stroke-width="0.7"/>
<text x="22" y="188.05">1</text>
<line x1="28.8" y1="185.18" x2="30" y2="185.18" stroke="#555" stroke-width="0.6"/>
<line x1="28" y1="188.31" x2="30" y2="188.31" stroke="#555" stroke-width="0.6"/>
<line x1="28.8" y1="191.44" x2="30" y2="191.44" stroke="#555" stroke-width="0.6"/>
<line x1="27" y1="194.58" x2="30" y2="194.58" stroke="#555" stroke-width="0.6"/>
<line x1="28.8" y1="197.71" x2="30" y2="197.71" stroke="#555" stroke-width="0.6"/>
<line x1="28" y1="200.84" x2="30" y2="200.84" stroke="#555" stroke-width="0.6"/>
<line x1="28.8" y1="203.97" x2="30" y2="203.97" stroke="#555" stroke-width="0.6"/>
<line x1="19" y1="207.10" x2="30" y2="207.10" stroke="#606060" stroke-width="0.7"/>
<text x="22" y="213.10">2</text>
<line x1="28.8" y1="210.23" x2="30" y2="210.23" stroke="#555" stroke-width="0.6"/>
<line x1="28" y1="213.36" x2="30" y2="213.36" stroke="#555" stroke-width="0.6"/>
<line x1="28.8" y1="216.49" x2="30" y2="216.49" stroke="#555" stroke-width="0.6"/>
<line x1="27" y1="219.62" x2="30" y2="219.62" stroke="#555" stroke-width="0.6"/>
<line x1="28.8" y1="222.76" x2="30" y2="222.76" stroke="#555" stroke-width="0.6"/>
<line x1="28" y1="225.89" x2="30" y2="225.89" stroke="#555" stroke-width="0.6"/>
<line x1="28.8" y1="229.02" x2="30" y2="229.02" stroke="#555" stroke-width="0.6"/>
<line x1="19" y1="232.15" x2="30" y2="232.15" stroke="#606060" stroke-width="0.7"/>
<text x="22" y="238.15">3</text>
<line x1="28.8" y1="235.28" x2="30" y2="235.28" stroke="#555" stroke-width="0.6"/>
<line x1="28" y1="238.41" x2="30" y2="238.41" stroke="#555" stroke-width="0.6"/>
<line x1="28.8" y1="241.54" x2="30" y2="241.54" stroke="#555" stroke-width="0.6"/>
<line x1="27" y1="244.68" x2="30" y2="244.68" stroke="#555" stroke-width="0.6"/>
<line x1="28.8" y1="247.81" x2="30" y2="247.81" stroke="#555" stroke-width="0.6"/>
<line x1="28" y1="250.94" x2="30" y2="250.94" stroke="#555" stroke-width="0.6"/>
<line x1="28.8" y1="254.07" x2="30" y2="254.07" stroke="#555" stroke-width="0.6"/>
<line x1="19" y1="257.20" x2="30" y2="257.20" stroke="#606060" stroke-width="0.7"/>
<text x="22" y="263.20">4</text>
<line x1="28.8" y1="260.33" x2="30" y2="260.33" stroke="#555" stroke-width="0.6"/>
<line x1="28" y1="263.46" x2="30" y2="263.46" stroke="#555" stroke-width="0.6"/>
<line x1="28.8" y1="266.59" x2="30" y2="266.59" stroke="#555" stroke-width="0.6"/>
<line x1="27" y1="269.72" x2="30" y2="269.72" stroke="#555" stroke-width="0.6"/>
<line x1="28.8" y1="272.86" x2="30" y2="272.86" stroke="#555" stroke-width="0.6"/>
<line x1="28" y1="275.99" x2="30" y2="275.99" stroke="#555" stroke-width="0.6"/>
<line x1="28.8" y1="279.12" x2="30" y2="279.12" stroke="#555" stroke-width="0.6"/>
<line x1="19" y1="282.25" x2="30" y2="282.25" stroke="#606060" stroke-width="0.7"/>
<text x="22" y="288.25">5</text>
<line x1="28.8" y1="285.38" x2="30" y2="285.38" stroke="#555" stroke-width="0.6"/>
<line x1="28" y1="288.51" x2="30" y2="288.51" stroke="#555" stroke-width="0.6"/>
<line x1="28.8" y1="291.64" x2="30" y2="291.64" stroke="#555" stroke-width="0.6"/>
<line x1="27" y1="294.77" x2="30" y2="294.77" stroke="#555" stroke-width="0.6"/>
<line x1="28.8" y1="297.91" x2="30" y2="297.91" stroke="#555" stroke-width="0.6"/>
<line x1="28" y1="301.04" x2="30" y2="301.04" stroke="#555" stroke-width="0.6"/>
<line x1="28.8" y1="304.17" x2="30" y2="304.17" stroke="#555" stroke-width="0.6"/>
<line x1="19" y1="307.30" x2="30" y2="307.30" stroke="#606060" stroke-width="0.7"/>
<text x="22" y="313.30">6</text>
<line x1="28.8" y1="310.43" x2="30" y2="310.43" stroke="#555" stroke-width="0.6"/>
<line x1="28" y1="313.56" x2="30" y2="313.56" stroke="#555" stroke-width="0.6"/>
<line x1="28.8" y1="316.69" x2="30" y2="316.69" stroke="#555" stroke-width="0.6"/>
<line x1="27" y1="319.82" x2="30" y2="319.82" stroke="#555" stroke-width="0.6"/>
<line x1="28.8" y1="322.96" x2="30" y2="322.96" stroke="#555" stroke-width="0.6"/>
<line x1="28" y1="326.09" x2="30" y2="326.09" stroke="#555" stroke-width="0.6"/>
<line x1="28.8" y1="329.22" x2="30" y2="329.22" stroke="#555" stroke-width="0.6"/>
<line x1="19" y1="332.35" x2="30" y2="332.35" stroke="#606060" stroke-width="0.7"/>
<text x="22" y="338.35">7</text>
<line x1="28.8" y1="335.48" x2="30" y2="335.48" stroke="#555" stroke-width="0.6"/>
<line x1="28" y1="338.61" x2="30" y2="338.61" stroke="#555" stroke-width="0.6"/>
<line x1="28.8" y1="341.74" x2="30" y2="341.74" stroke="#555" stroke-width="0.6"/>
<line x1="27" y1="344.88" x2="30" y2="344.88" stroke="#555" stroke-width="0.6"/>
<line x1="28.8" y1="348.01" x2="30" y2="348.01" stroke="#555" stroke-width="0.6"/>
<line x1="28" y1="351.14" x2="30" y2="351.14" stroke="#555" stroke-width="0.6"/>
<line x1="28.8" y1="354.27" x2="30" y2="354.27" stroke="#555" stroke-width="0.6"/>
<line x1="19" y1="357.40" x2="30" y2="357.40" stroke="#606060" stroke-width="0.7"/>
<text x="22" y="363.40">8</text>
<line x1="28.8" y1="360.53" x2="30" y2="360.53" stroke="#555" stroke-width="0.6"/>
<line x1="28" y1="363.66" x2="30" y2="363.66" stroke="#555" stroke-width="0.6"/>
<line x1="28.8" y1="366.79" x2="30" y2="366.79" stroke="#555" stroke-width="0.6"/>
<line x1="27" y1="369.92" x2="30" y2="369.92" stroke="#555" stroke-width="0.6"/>
<line x1="28.8" y1="373.06" x2="30" y2="373.06" stroke="#555" stroke-width="0.6"/>
<line x1="28" y1="376.19" x2="30" y2="376.19" stroke="#555" stroke-width="0.6"/>
<line x1="28.8" y1="379.32" x2="30" y2="379.32" stroke="#555" stroke-width="0.6"/>
<line x1="19" y1="382.45" x2="30" y2="382.45" stroke="#606060" stroke-width="0.7"/>
<text x="22" y="388.45">9</text>
<line x1="28.8" y1="385.58" x2="30" y2="385.58" stroke="#555" stroke-width="0.6"/>
<line x1="28" y1="388.71" x2="30" y2="388.71" stroke="#555" stroke-width="0.6"/>
<line x1="28.8" y1="391.84" x2="30" y2="391.84" stroke="#555" stroke-width="0.6"/>
<line x1="27" y1="394.98" x2="30" y2="394.98" stroke="#555" stroke-width="0.6"/>
<line x1="28.8" y1="398.11" x2="30" y2="398.11" stroke="#555" stroke-width="0.6"/>
<line x1="28" y1="401.24" x2="30" y2="401.24" stroke="#555" stroke-width="0.6"/>
<line x1="28.8" y1="404.37" x2="30" y2="404.37" stroke="#555" stroke-width="0.6"/>
<line x1="19" y1="407.50" x2="30" y2="407.50" stroke="#606060" stroke-width="0.7"/>
<text x="22" y="413.50">10</text>
<line x1="28.8" y1="410.63" x2="30" y2="410.63" stroke="#555" stroke-width="0.6"/>
<line x1="28" y1="413.76" x2="30" y2="413.76" stroke="#555" stroke-width="0.6"/>
<line x1="28.8" y1="416.89" x2="30" y2="416.89" stroke="#555" stroke-width="0.6"/>
<line x1="27" y1="420.02" x2="30" y2="420.02" stroke="#555" stroke-width="0.6"/>
<line x1="28.8" y1="423.16" x2="30" y2="423.16" stroke="#555" stroke-width="0.6"/>
<line x1="28" y1="426.29" x2="30" y2="426.29" stroke="#555" stroke-width="0.6"/>
<line x1="30" y1="49.5" x2="620" y2="49.5" stroke="#4c4c4c" stroke-width="0.8"/>
<line x1="30.2" y1="50" x2="30.2" y2="428" stroke="#4c4c4c" stroke-width="0.8"/>
</svg>
<div class="sc menu" style="left:57px;top:11.5px;width:236.1px;height:412.45px;">
<div class="mi" style="top:3.00px;"><span class="l" style="left:16.5px">Mode</span><span class="arr" style="border-left-color:#111;"></span></div>
<div class="sep" style="top:24.62px;"></div>
<div class="mi hl" style="top:31.29px;"><span class="l" style="left:16.5px">Adjustments</span><span class="arr" style="border-left-color:#fff;"></span></div>
<div class="sep" style="top:52.91px;"></div>
<div class="mi" style="top:59.58px;"><span class="l" style="left:16.5px">Auto Tone</span><span class="r" style="right:12px">Shift+Ctrl+L</span></div>
<div class="mi" style="top:78.60px;"><span class="l" style="left:16.5px">Auto Contrast</span><span class="r" style="right:12px">Alt+Shift+Ctrl+L</span></div>
<div class="mi" style="top:97.62px;"><span class="l" style="left:16.5px">Auto Color</span><span class="r" style="right:12px">Shift+Ctrl+B</span></div>
<div class="sep" style="top:119.24px;"></div>
<div class="mi" style="top:125.91px;"><span class="l" style="left:16.5px">Image Size...</span><span class="r" style="right:12px">Alt+Ctrl+I</span></div>
<div class="mi" style="top:144.93px;"><span class="l" style="left:16.5px">Canvas Size...</span><span class="r" style="right:12px">Alt+Ctrl+C</span></div>
<div class="mi" style="top:163.95px;"><span class="l" style="left:16.5px">Image Rotation</span><span class="arr" style="border-left-color:#111;"></span></div>
<div class="mi dis" style="top:182.97px;"><span class="l" style="left:16.5px">Crop</span></div>
<div class="mi" style="top:201.99px;"><span class="l" style="left:16.5px">Trim...</span></div>
<div class="mi" style="top:221.01px;"><span class="l" style="left:16.5px">Reveal All</span></div>
<div class="sep" style="top:242.63px;"></div>
<div class="mi" style="top:249.30px;"><span class="l" style="left:16.5px">Duplicate...</span></div>
<div class="mi" style="top:268.32px;"><span class="l" style="left:16.5px">Apply Image...</span></div>
<div class="mi" style="top:287.34px;"><span class="l" style="left:16.5px">Calculations...</span></div>
<div class="sep" style="top:308.96px;"></div>
<div class="mi" style="top:315.63px;"><span class="l" style="left:16.5px">Variables</span><span class="arr" style="border-left-color:#111;"></span></div>
<div class="mi dis" style="top:334.65px;"><span class="l" style="left:16.5px">Apply Data Set...</span></div>
<div class="sep" style="top:356.27px;"></div>
<div class="mi dis" style="top:362.94px;"><span class="l" style="left:16.5px">Trap...</span></div>
<div class="sep" style="top:384.56px;"></div>
<div class="mi" style="top:391.23px;"><span class="l" style="left:16.5px">Analysis</span><span class="arr" style="border-left-color:#111;"></span></div>
</div>
<div class="sc menu" style="left:176px;top:26px;width:249.8px;height:481.04px;">
<div class="mi" style="top:4.00px;"><span class="l" style="left:16.5px">Brightness/Contrast...</span></div>
<div class="mi" style="top:23.02px;"><span class="l" style="left:16.5px">Levels...</span><span class="r" style="right:16px">Ctrl+L</span></div>
<div class="mi" style="top:42.04px;"><span class="l" style="left:16.5px">Curves...</span><span class="r" style="right:16px">Ctrl+M</span></div>
<div class="mi" style="top:61.06px;"><span class="l" style="left:16.5px">Exposure...</span></div>
<div class="sep" style="top:82.68px;"></div>
<div class="mi" style="top:89.35px;"><span class="l" style="left:16.5px">Vibrance...</span></div>
<div class="mi" style="top:108.37px;"><span class="l" style="left:16.5px">Hue/Saturation...</span><span class="r" style="right:16px">Ctrl+U</span></div>
<div class="mi" style="top:127.39px;"><span class="l" style="left:16.5px">Color Balance...</span><span class="r" style="right:16px">Ctrl+B</span></div>
<div class="mi hl" style="top:146.41px;"><span class="l" style="left:16.5px">Black &amp; White...</span><span class="r" style="right:16px">Alt+Shift+Ctrl+B</span></div>
<div class="mi" style="top:165.43px;"><span class="l" style="left:16.5px">Photo Filter...</span></div>
<div class="mi" style="top:184.45px;"><span class="l" style="left:16.5px">Channel Mixer...</span></div>
<div class="mi" style="top:203.47px;"><span class="l" style="left:16.5px">Color Lookup...</span></div>
<div class="sep" style="top:225.09px;"></div>
<div class="mi" style="top:231.76px;"><span class="l" style="left:16.5px">Invert</span><span class="r" style="right:16px">Ctrl+I</span></div>
<div class="mi" style="top:250.78px;"><span class="l" style="left:16.5px">Posterize...</span></div>
<div class="mi" style="top:269.80px;"><span class="l" style="left:16.5px">Threshold...</span></div>
<div class="mi" style="top:288.82px;"><span class="l" style="left:16.5px">Gradient Map...</span></div>
<div class="mi" style="top:307.84px;"><span class="l" style="left:16.5px">Selective Color...</span></div>
<div class="sep" style="top:329.46px;"></div>
<div class="mi" style="top:336.13px;"><span class="l" style="left:16.5px">Shadows/Highlights...</span></div>
<div class="mi" style="top:355.15px;"><span class="l" style="left:16.5px">HDR Toning...</span></div>
<div class="mi" style="top:374.17px;"><span class="l" style="left:16.5px">Variations...</span></div>
<div class="sep" style="top:395.79px;"></div>
<div class="mi" style="top:402.46px;"><span class="l" style="left:16.5px">Desaturate</span><span class="r" style="right:16px">Shift+Ctrl+U</span></div>
<div class="mi" style="top:421.48px;"><span class="l" style="left:16.5px">Match Color...</span></div>
<div class="mi" style="top:440.50px;"><span class="l" style="left:16.5px">Replace Color...</span></div>
<div class="mi" style="top:459.52px;"><span class="l" style="left:16.5px">Equalize</span></div>
</div>
</body></html>
